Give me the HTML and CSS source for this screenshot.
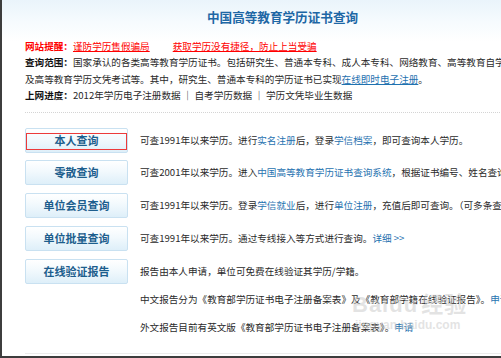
FILE: index.html
```html
<!DOCTYPE html>
<html lang="zh">
<head>
<meta charset="utf-8">
<title>中国高等教育学历证书查询</title>
<link rel="stylesheet" href="styles.css">
</head>
<body>
<div class="frame">
  <div class="page">
    <h1 class="title">中国高等教育学历证书查询</h1>
    <div class="notice">
      <p class="line"><b class="warn">网站提醒：</b><a class="red" href="#">谨防学历售假骗局</a><span class="sp"></span><a class="red" href="#">获取学历没有捷径，防止上当受骗</a></p>
      <p class="line"><b>查询范围：</b>国家承认的各类高等教育学历证书。包括研究生、普通本专科、成人本专科、网络教育、高等教育自学考试</p>
      <p class="line">及高等教育学历文凭考试等。其中，研究生、普通本专科的学历证书已实现<a class="ul" href="#">在线即时电子注册</a>。</p>
      <p class="line"><b>上网进度：</b>2012年学历电子注册数据 ｜ 自考学历数据 ｜ 学历文凭毕业生数据</p>
    </div>
    <div class="sep"></div>
    <div class="list">
      <div class="row">
        <a class="btn" href="#">本人查询<span class="mark"></span></a>
        <div class="desc"><p class="first">可查1991年以来学历。进行<a href="#">实名注册</a>后，登录<a href="#">学信档案</a>，即可查询本人学历。</p></div>
      </div>
      <div class="row">
        <a class="btn" href="#">零散查询</a>
        <div class="desc"><p class="first">可查2001年以来学历。进入<a href="#">中国高等教育学历证书查询系统</a>，根据证书编号、姓名查询即可。</p></div>
      </div>
      <div class="row">
        <a class="btn" href="#">单位会员查询</a>
        <div class="desc"><p class="first">可查1991年以来学历。登录<a href="#">学信就业</a>后，进行<a href="#">单位注册</a>，充值后即可查询。（可多条查询）</p></div>
      </div>
      <div class="row">
        <a class="btn" href="#">单位批量查询</a>
        <div class="desc"><p class="first">可查1991年以来学历。通过专线接入等方式进行查询。<a href="#">详细 &gt;&gt;</a></p></div>
      </div>
      <div class="row">
        <a class="btn" href="#">在线验证报告</a>
        <div class="desc">
          <p class="first">报告由本人申请，单位可免费在线验证其学历/学籍。</p>
          <p class="more">中文报告分为《教育部学历证书电子注册备案表》及《教育部学籍在线验证报告》。<a href="#">申请</a></p>
          <p class="more">外文报告目前有英文版《教育部学历证书电子注册备案表》。<a href="#">申请</a></p>
        </div>
      </div>
    </div>
    <div class="foot"></div>
  </div>
  <div class="watermark"><span class="wm-big">Bai<span class="wm-du">du</span>经验</span><span class="wm-small">jingyan.baidu.com</span></div>
</div>
</body>
</html>
```
FILE: styles.css
```css
html, body {
  margin: 0;
  padding: 0;
}
body {
  width: 501px;
  height: 358px;
  overflow: hidden;
  background: #ffffff;
  font-family: "Noto Sans CJK SC", "Liberation Sans", sans-serif;
  font-size: 9.6px;
  color: #2a2a2a;
}
.frame {
  position: relative;
  width: 501px;
  height: 358px;
  box-sizing: border-box;
  border-left: 2px solid #3d3d3d;
  border-bottom: 2px solid #3d3d3d;
  background: linear-gradient(to bottom, #eaf4fb 0px, #f6fbfe 22px, #ffffff 42px);
  overflow: hidden;
}
.page {
  width: 515px;
  padding-left: 23px;
}
.title {
  margin: 0;
  padding-top: 9px;
  height: 16px;
  line-height: 16px;
  text-align: center;
  font-size: 12.6px;
  font-weight: bold;
  color: #1e67a5;
  white-space: nowrap;
}
.notice {
  margin-top: 13px;
}
.line {
  margin: 0;
  line-height: 16.4px;
  white-space: nowrap;
  color: #2a2a2a;
}
.line b {
  color: #111;
}
.line .warn {
  color: #ff0000;
}
a {
  text-decoration: none;
  color: #1f72b0;
}
a.red {
  color: #ff0000;
  text-decoration: underline;
}
a.ul {
  color: #1f72b0;
  text-decoration: underline;
}
.sp {
  display: inline-block;
  width: 23px;
}
.sep {
  margin-top: 8px;
  border-top: 1px dotted #d4d4d4;
}
.list {
  margin-top: 15px;
  display: flex;
  flex-direction: column;
  gap: 7.75px;
}
.row {
  display: flex;
  align-items: flex-start;
  gap: 12px;
}
.btn {
  position: relative;
  flex: none;
  width: 103px;
  height: 25px;
  box-sizing: border-box;
  border: 1px solid #c9e1f1;
  border-radius: 2px;
  background: linear-gradient(to bottom, #ffffff 0%, #f2f9fd 45%, #deeff9 100%);
  color: #1d5e8d;
  font-size: 11px;
  font-weight: bold;
  line-height: 23px;
  text-align: center;
}
.mark {
  position: absolute;
  left: 0px;
  top: 4px;
  width: 101px;
  height: 17px;
  border: 1px solid #ec3a3a;
  box-sizing: border-box;
}
.desc p {
  margin: 0;
  white-space: nowrap;
  color: #2a2a2a;
}
.desc .first {
  line-height: 25px;
}
.desc .more {
  margin-top: 2px;
  line-height: 26.5px;
}
.foot {
  margin-top: 12px;
  border-top: 1px solid #ececec;
}
.watermark {
  position: absolute;
  left: 350px;
  top: 292px;
  display: flex;
  flex-direction: column;
  align-items: flex-start;
  color: rgba(200, 200, 200, 0.5);
  pointer-events: none;
}
.wm-big {
  font-family: "Liberation Sans", "Noto Sans CJK SC", sans-serif;
  font-size: 22px;
  font-weight: bold;
  line-height: 26px;
  letter-spacing: 1px;
}
.wm-du {
  margin-right: 3px;
}
.wm-small {
  font-family: "Liberation Sans", sans-serif;
  font-size: 12px;
  font-weight: bold;
  line-height: 14px;
  margin-left: 3px;
}
```
